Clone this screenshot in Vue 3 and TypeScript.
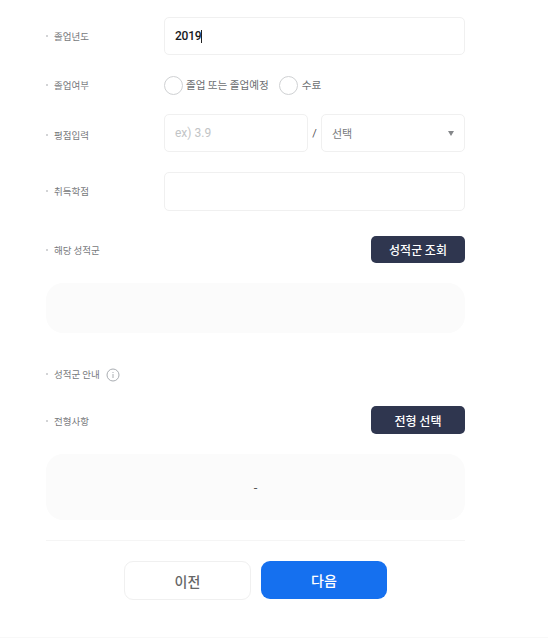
<script setup lang="ts">
const rows = { year: '졸업년도', status: '졸업여부', gpa: '평점입력', credit: '취득학점' }
</script>

<template>
  <div class="page">
    <section class="form">
      <div class="row row-year">
        <span class="label">{{ rows.year }}</span>
        <div class="field filled">2019<i class="caret"></i></div>
      </div>
      <div class="row row-status">
        <span class="label">{{ rows.status }}</span>
        <div class="radios">
          <span class="radio"></span><span class="radio-text">졸업 또는 졸업예정</span>
          <span class="radio second"></span><span class="radio-text">수료</span>
        </div>
      </div>
      <div class="row row-gpa">
        <span class="label">{{ rows.gpa }}</span>
        <div class="gpa">
          <div class="field placeholder">ex) 3.9</div>
          <span class="slash">/</span>
          <div class="field select"><span>선택</span><i class="arrow"></i></div>
        </div>
      </div>
      <div class="row row-credit">
        <span class="label">{{ rows.credit }}</span>
        <div class="field"></div>
      </div>
      <div class="between row-grade">
        <span class="label">해당 성적군</span>
        <button class="dark">성적군 조회</button>
      </div>
      <div class="panel panel-grade"></div>
      <div class="info">
        <span class="label">성적군 안내</span>
        <svg class="info-icon" viewBox="0 0 14 14" width="14" height="14" aria-hidden="true">
          <circle cx="7" cy="7" r="6" fill="none" stroke="#a9adb2" stroke-width="1" />
          <rect x="6.5" y="6" width="1" height="4" fill="#a9adb2" />
          <rect x="6.5" y="4" width="1" height="1" fill="#a9adb2" />
        </svg>
      </div>
      <div class="between row-type">
        <span class="label">전형사항</span>
        <button class="dark">전형 선택</button>
      </div>
      <div class="panel panel-type">-</div>
      <div class="actions">
        <button class="prev">이전</button>
        <button class="next">다음</button>
      </div>
    </section>
    <div class="bottom-line"></div>
  </div>
</template>

<style>
html, body { background: #fff; }
</style>

<style scoped>
.page {
  height: 644px;
  box-sizing: border-box;
  padding: 17px 83px 0 46px;
  overflow: hidden;
  font-family: "Noto Sans CJK KR", "Noto Sans", sans-serif;
  color: #666;
}
.form { display: flex; flex-direction: column; }
.row { display: grid; grid-template-columns: 118px 1fr; align-items: center; }
.label {
  position: relative;
  padding-left: 8px;
  font-size: 9.5px;
  line-height: 14px;
  color: #77797c;
}
.label::before {
  content: "";
  position: absolute;
  left: 0;
  top: 6px;
  width: 2px;
  height: 2px;
  border-radius: 50%;
  background: #c4c6c9;
}
.field {
  height: 38px;
  box-sizing: border-box;
  border: 1px solid #f0f0f0;
  border-radius: 5px;
  display: flex;
  align-items: center;
  padding: 0 10px;
  background: #fff;
}
.filled { font: 500 12px "Roboto", sans-serif; color: #17191d; letter-spacing: -0.2px; }
.caret { width: 1px; height: 13px; background: #222; margin-left: 0; }
.row-status { margin-top: 19px; height: 22px; }
.radios { display: flex; align-items: center; font-size: 10.6px; color: #6d6f72; }
.radio {
  width: 19px;
  height: 19px;
  box-sizing: border-box;
  border: 1px solid #cfd1d3;
  border-radius: 50%;
}
.radio-text { margin-left: 3px; line-height: 16px; }
.second { margin-left: 10px; }
.second + .radio-text { margin-left: 4px; }
.row-gpa { margin-top: 18px; }
.row-gpa .label { margin-top: 3px; }
.row-credit .label { margin-top: -1px; }
.gpa { display: grid; grid-template-columns: 144px 13px 144px; align-items: center; }
.placeholder { font: 12px "Roboto", sans-serif; color: #c2c4c6; }
.slash { font: 11px "Roboto", sans-serif; text-align: center; color: #555; }
.select { justify-content: space-between; font-size: 11px; color: #77797c; padding-right: 10px; }
.arrow {
  width: 0;
  height: 0;
  border-left: 3px solid transparent;
  border-right: 3px solid transparent;
  border-top: 5px solid #85878a;
}
.row-credit { margin-top: 20px; }
.row-credit .field { height: 39px; }
.between { display: flex; justify-content: space-between; align-items: center; }
.row-grade { margin-top: 25px; }
.dark {
  width: 94px;
  height: 27px;
  padding: 0;
  border: 0;
  border-radius: 5px;
  background: #2f364f;
  color: #fff;
  font: 500 12px "Noto Sans CJK KR", sans-serif;
}
.panel {
  border-radius: 17px;
  background: #fbfbfb;
  display: flex;
  align-items: center;
  justify-content: center;
  font: 13px "Roboto", sans-serif;
  color: #555;
}
.panel-grade { height: 50px; margin-top: 20px; }
.info { display: flex; align-items: center; gap: 6px; margin-top: 34px; height: 14px; }
.info-icon { display: block; margin-top: 1px; }
.row-type { margin-top: 25px; }
.row-type .label { margin-top: 2px; }
.row-type .dark { height: 28px; }
.panel-type { height: 66px; margin-top: 20px; }
.actions {
  margin-top: 20px;
  padding-top: 20px;
  border-top: 1px solid #f5f5f5;
  display: flex;
  justify-content: center;
  gap: 10px;
}
.actions button {
  width: 127px;
  height: 39px;
  border-radius: 9px;
  font: 500 14px "Noto Sans CJK KR", sans-serif;
  padding: 0;
}
.prev { background: #fff; border: 1px solid #f0f0f0; color: #666; }
.next { background: #1570ef; border: 0; color: #fff; }
.actions .next { width: 126px; height: 38px; }
.bottom-line {
  margin: 37px -83px 0 -46px;
  border-top: 1px solid #f8f8f8;
}
</style>
